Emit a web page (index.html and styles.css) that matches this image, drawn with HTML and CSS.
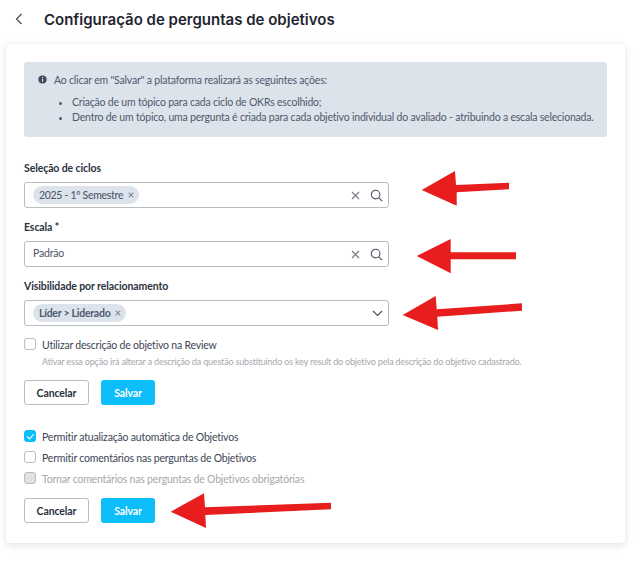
FILE: index.html
```html
<!DOCTYPE html>
<html lang="pt-BR">
<head>
    <meta charset="UTF-8">
    <meta name="viewport" content="width=device-width, initial-scale=1.0">
    <title>Configuração de perguntas de objetivos</title>
    <link rel="stylesheet" href="styles.css">
</head>
<body>
    <header class="page-header">
        <svg class="back-icon" width="8" height="12" viewBox="0 0 8 12"><path d="M6.5 1 1.5 6l5 5" fill="none" stroke="#444b57" stroke-width="1.2"/></svg>
        <h1>Configuração de perguntas de objetivos</h1>
    </header>

    <main class="card">
        <div class="info-box">
            <p class="info-title">
                <svg class="info-icon" width="9" height="9" viewBox="0 0 9 9"><circle cx="4.5" cy="4.5" r="4.1" fill="#3f4a5c"/><rect x="4" y="3.8" width="1.1" height="3" fill="#dde3ea"/><rect x="4" y="2" width="1.1" height="1.1" fill="#dde3ea"/></svg>
                Ao clicar em "Salvar" a plataforma realizará as seguintes ações:
            </p>
            <ul>
                <li>Criação de um tópico para cada ciclo de OKRs escolhido;</li>
                <li>Dentro de um tópico, uma pergunta é criada para cada objetivo individual do avaliado - atribuindo a escala selecionada.</li>
            </ul>
        </div>

        <div class="form-group">
            <label>Seleção de ciclos</label>
            <div class="field">
                <span class="tag">2025 - 1º Semestre <svg class="tag-x" width="6" height="6" viewBox="0 0 6 6"><path d="M.7.7l4.6 4.6M5.3.7.7 5.3" stroke="#7f8894" stroke-width="1.1"/></svg></span>
                <span class="field-icons">
                    <svg width="9" height="9" viewBox="0 0 9 9"><path d="M1 1l7 7M8 1 1 8" stroke="#7b828c" stroke-width="1.3"/></svg>
                    <svg width="13" height="13" viewBox="0 0 13 13"><circle cx="5.6" cy="5.6" r="4.3" fill="none" stroke="#4a5361" stroke-width="1.1"/><path d="M8.8 8.8l3.4 3.4" stroke="#4a5361" stroke-width="1.2"/></svg>
                </span>
            </div>
        </div>

        <div class="form-group">
            <label>Escala *</label>
            <div class="field">
                <span class="field-value">Padrão</span>
                <span class="field-icons">
                    <svg width="9" height="9" viewBox="0 0 9 9"><path d="M1 1l7 7M8 1 1 8" stroke="#7b828c" stroke-width="1.3"/></svg>
                    <svg width="13" height="13" viewBox="0 0 13 13"><circle cx="5.6" cy="5.6" r="4.3" fill="none" stroke="#4a5361" stroke-width="1.1"/><path d="M8.8 8.8l3.4 3.4" stroke="#4a5361" stroke-width="1.2"/></svg>
                </span>
            </div>
        </div>

        <div class="form-group">
            <label>Visibilidade por relacionamento</label>
            <div class="field">
                <span class="tag tag-bold">Líder &gt; Liderado <svg class="tag-x" width="6" height="6" viewBox="0 0 6 6"><path d="M.7.7l4.6 4.6M5.3.7.7 5.3" stroke="#7f8894" stroke-width="1.1"/></svg></span>
                <span class="field-icons">
                    <svg width="11" height="7" viewBox="0 0 11 7"><path d="M1 1l4.5 4.5L10 1" fill="none" stroke="#4a5361" stroke-width="1.2"/></svg>
                </span>
            </div>
        </div>

        <div class="check-row first-check">
            <span class="checkbox"></span>
            <span class="check-label">Utilizar descrição de objetivo na Review</span>
        </div>
        <p class="hint">Ativar essa opção irá alterar a descrição da questão substituindo os key result do objetivo pela descrição do objetivo cadastrado.</p>

        <div class="button-group">
            <button class="btn-cancel">Cancelar</button>
            <button class="btn-save">Salvar</button>
        </div>

        <div class="check-list">
            <div class="check-row">
                <span class="checkbox checked"><svg width="9" height="7" viewBox="0 0 9 7"><path d="M1 3.4l2.5 2.5L8 1" fill="none" stroke="#fff" stroke-width="1.1"/></svg></span>
                <span class="check-label">Permitir atualização automática de Objetivos</span>
            </div>
            <div class="check-row">
                <span class="checkbox"></span>
                <span class="check-label">Permitir comentários nas perguntas de Objetivos</span>
            </div>
            <div class="check-row disabled">
                <span class="checkbox"></span>
                <span class="check-label">Tornar comentários nas perguntas de Objetivos obrigatórias</span>
            </div>
        </div>

        <div class="button-group last-buttons">
            <button class="btn-cancel">Cancelar</button>
            <button class="btn-save">Salvar</button>
        </div>
    </main>

    <!-- setas vermelhas por cima da tela -->
    <svg class="arrows" width="639" height="564" viewBox="0 0 639 564">
        <polygon points="421.7,190 455,171 456,185 509,182.7 509,189.3 456.7,192.3 456.7,205.7"/>
        <polygon points="416.7,256 450.7,239 450.7,252.3 516,252.3 516,259.3 450.7,259.3 450.7,273.3"/>
        <polygon points="402.7,315 435.7,296 436.7,309.3 522,303.3 522,310.7 437.3,316.7 438,330"/>
        <polygon points="170.7,511.7 204,493.3 205,507.3 331,502.7 331,509.3 205.3,515 206,528"/>
    </svg>
</body>
</html>
```

FILE: styles.css
```css
* { box-sizing: border-box; }
html, body { margin: 0; padding: 0; }
body { position: relative; width: 639px; height: 564px; overflow: hidden; background: #fff; font-family: Lato, 'Noto Sans', sans-serif; font-size: 10.5px; letter-spacing: -0.2px; color: #3d4656; }
.page-header { display: flex; align-items: center; height: 44px; padding: 0 0 6px 15px; }
.back-icon { margin-right: 21px; }
h1 { margin: 0; font-family: Inter, sans-serif; font-size: 15px; font-weight: 600; letter-spacing: 0; color: #1f2530; }
.card { margin-left: 6px; width: 619px; height: 499px; padding: 18px 18px 0; background: #fff; border-radius: 4px; box-shadow: 0 2px 8px rgba(0,0,0,0.12); }
.info-box { height: 75px; padding: 11px 12px 0 14px; background: #dde3ea; border-radius: 3px; color: #4d5a6e; }
.info-title { display: flex; align-items: center; gap: 7px; margin: 0; height: 14px; }
.info-title .info-icon { flex: none; margin-top: -2px; }
.info-box ul { margin: 8px 0 0; padding: 0 0 0 34px; }
.info-box li { height: 15px; line-height: 14px; }
.form-group { width: 365px; margin-top: 25px; }
.form-group + .form-group { margin-top: 13px; }
label { display: block; height: 14px; margin-bottom: 6px; font-weight: 700; line-height: 12px; letter-spacing: -0.1px; color: #2b3340; }
.field { display: flex; align-items: center; justify-content: space-between; height: 26px; padding: 0 5px 0 8px; border: 1px solid #b9bcc0; border-radius: 3px; }
.field-value { padding-bottom: 2px; color: #4d5563; }
.field-icons { display: flex; align-items: center; gap: 10px; }
.tag { display: inline-flex; align-items: center; gap: 5px; height: 18px; padding: 0 5px 1px 6px; background: #dde3ea; border-radius: 9px; color: #4d5a6e; font-weight: 500; letter-spacing: -0.3px; }
.tag-bold { font-weight: 700; letter-spacing: -0.25px; }
.check-row { display: flex; align-items: center; gap: 6px; height: 14px; color: #3d4656; }
.check-label { padding-top: 2px; }
.first-check { margin-top: 11px; }
.checkbox { display: flex; align-items: center; justify-content: center; flex: none; width: 12px; height: 12px; background: #fff; border: 1px solid #b9bcc0; border-radius: 3px; }
.checkbox.checked { background: #0bbdf9; border-color: #0bbdf9; }
.disabled { color: #a5a8ad; }
.disabled .checkbox { background: #e2e2e2; }
.hint { margin: 5px 0 0 18px; height: 12px; font-size: 9px; line-height: 12px; letter-spacing: -0.18px; color: #a5a8ad; }
.button-group { display: flex; gap: 12px; margin-top: 12px; }
button { height: 25px; padding: 0; border-radius: 3px; font-family: inherit; font-size: 10.5px; font-weight: 700; letter-spacing: -0.1px; cursor: pointer; }
.btn-cancel { width: 65px; background: #fff; border: 1px solid #b9bcc0; color: #2b3340; }
.btn-save { width: 54px; background: #0bbdf9; border: none; color: #fff; }
.check-list { display: flex; flex-direction: column; gap: 7px; margin-top: 24px; }
.last-buttons { margin-top: 13px; }
.arrows { position: absolute; left: 0; top: 0; pointer-events: none; }
.arrows polygon { fill: #e81e1e; }
```
